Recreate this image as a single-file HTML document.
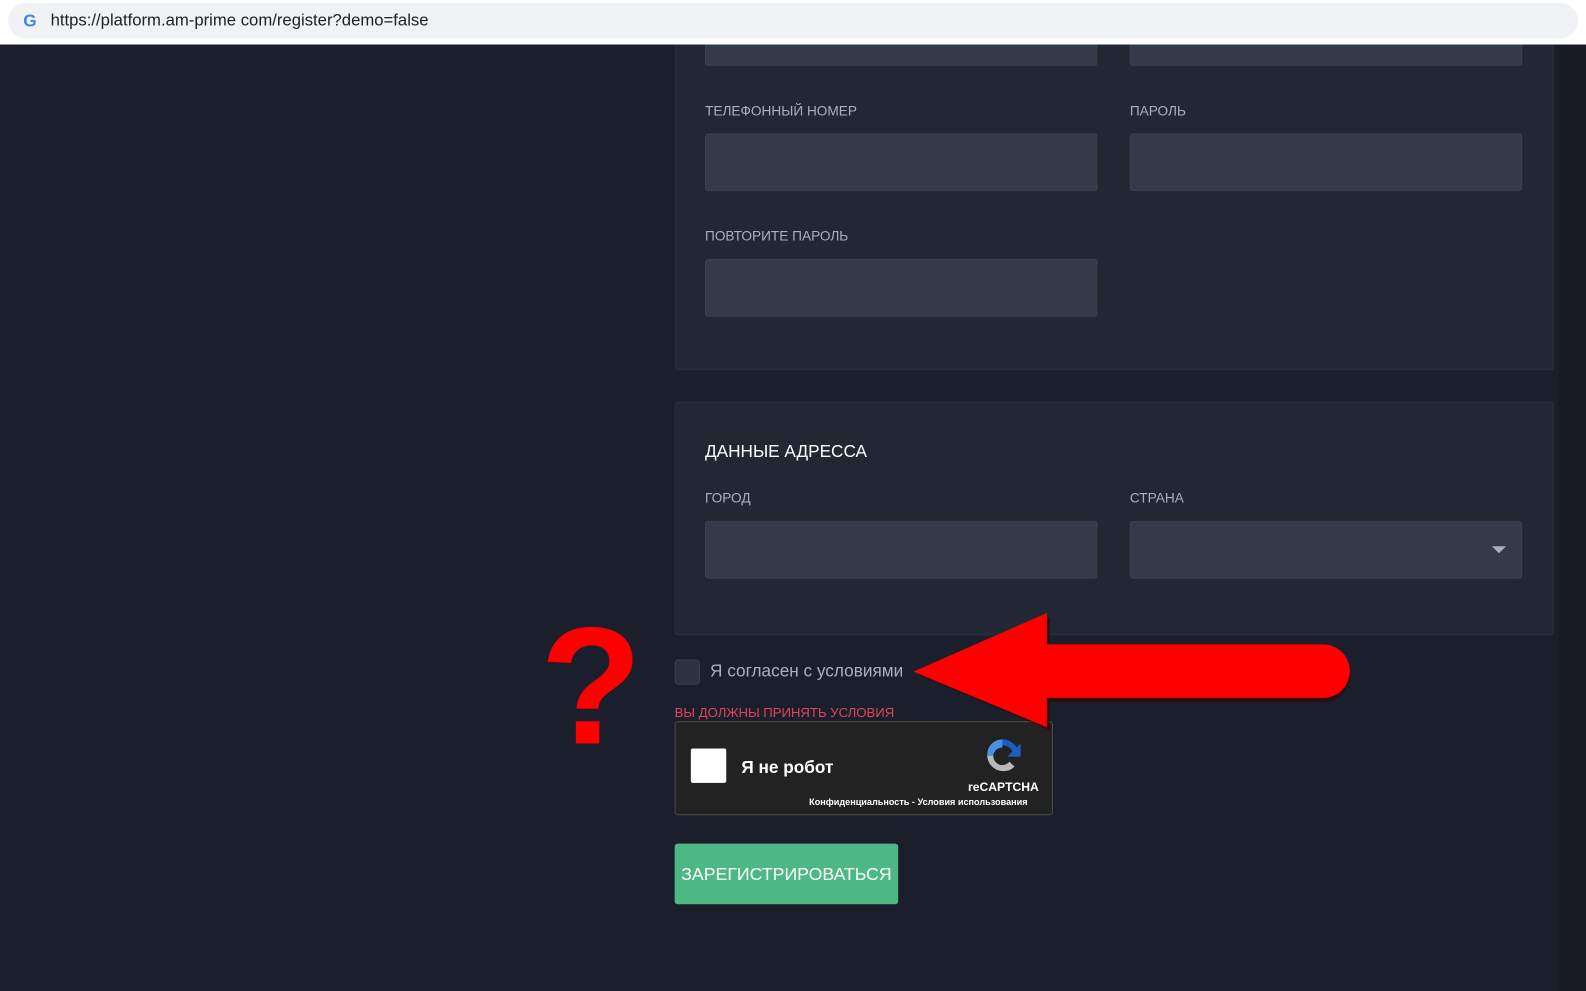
<!DOCTYPE html>
<html><head><meta charset="utf-8"><style>
*{margin:0;padding:0;box-sizing:border-box}
body{width:1586px;height:980px;background:#1b1f2c;font-family:"Liberation Sans",sans-serif;position:relative;overflow:hidden}
#w{position:absolute;left:0;top:0;width:1568px;height:969px;transform:scale(1.01148);transform-origin:0 0}
.bar{position:absolute;left:0;top:0;width:1568px;height:44px;background:#fff;z-index:10}
.url{position:absolute;left:8px;top:3px;width:1552px;height:35px;background:#f0f2f5;border-radius:18px}
.url span{position:absolute;left:42px;top:8px;font-size:16.5px;color:#202124}
.g{position:absolute;left:15px;top:8px;font-weight:bold;font-size:17px;color:#4285f4}
.panel{position:absolute;background:#222734;border:1px solid #2a3040;border-radius:3px}
.inp{position:absolute;background:#333a4a;border:1px solid #3a4152;border-radius:3px;height:57px;width:388px}
.lbl{position:absolute;font-size:13.5px;color:#aab0bd}
.abs{position:absolute}
</style></head><body><div id="w">
<div class="bar"><div class="url"><div class="g">G</div><span>https://platform.am-prime com/register?demo=false</span></div></div>
<div class="abs" style="left:1540px;top:44px;width:28px;height:936px;background:#181b25"></div>
<div class="panel" style="left:667px;top:30px;width:869px;height:336px;border-top:none"></div>
<div class="inp" style="left:697px;top:30px;height:35px"></div>
<div class="inp" style="left:1117px;top:30px;height:35px"></div>
<div class="lbl" style="left:697px;top:102px">ТЕЛЕФОННЫЙ НОМЕР</div>
<div class="lbl" style="left:1117px;top:102px">ПАРОЛЬ</div>
<div class="inp" style="left:697px;top:132px"></div>
<div class="inp" style="left:1117px;top:132px"></div>
<div class="lbl" style="left:697px;top:226px">ПОВТОРИТЕ ПАРОЛЬ</div>
<div class="inp" style="left:697px;top:256px"></div>
<div class="panel" style="left:667px;top:397px;width:869px;height:231px"></div>
<div class="abs" style="left:697px;top:437px;font-size:17px;color:#fff">ДАННЫЕ АДРЕССА</div>
<div class="lbl" style="left:697px;top:485px">ГОРОД</div>
<div class="lbl" style="left:1117px;top:485px">СТРАНА</div>
<div class="inp" style="left:697px;top:515px"></div>
<div class="inp" style="left:1117px;top:515px"></div>
<div class="abs" style="left:1475px;top:540px;width:0;height:0;border-left:7px solid transparent;border-right:7px solid transparent;border-top:7px solid #aab0bd"></div>
<div class="abs" style="left:667px;top:652px;width:25px;height:25px;background:#2c3242;border:1px solid #3a4152;border-radius:4px"></div>
<div class="abs" style="left:702px;top:654px;font-size:17px;color:#aab0bd">Я согласен с условиями</div>
<div class="abs" style="left:667px;top:697px;font-size:13px;color:#e0455a">ВЫ ДОЛЖНЫ ПРИНЯТЬ УСЛОВИЯ</div>
<div class="abs" style="left:667px;top:713px;width:374px;height:93px;background:#222;border:1px solid #4a4a4a;border-radius:3px"></div>
<div class="abs" style="left:683px;top:740px;width:35px;height:34px;background:#fff;border-radius:2px"></div>
<div class="abs" style="left:733px;top:749px;font-size:17px;color:#fff;font-weight:bold">Я не робот</div>
<svg class="abs" style="left:970px;top:727px" width="42" height="40" viewBox="0 0 42 40">
<path d="M21 4a16 16 0 0 1 14 8l4-4v13H26l5-5a10 10 0 0 0-10-6z" fill="#1c5fc4"/>
<path d="M6 20a15 15 0 0 1 15-16v8a9 9 0 0 0-9 8z" fill="#4a90e8"/>
<path d="M6 20h6a9 9 0 0 0 16 6l5 5a16 16 0 0 1-27-11z" fill="#b8b8b8"/>
</svg>
<div class="abs" style="left:957px;top:771px;font-size:12px;color:#fff;font-weight:bold">reCAPTCHA</div>
<div class="abs" style="left:800px;top:788px;font-size:9px;color:#fff;font-weight:bold">Конфиденциальность - Условия использования</div>
<div class="abs" style="left:667px;top:834px;width:221px;height:60px;background:#4cb985;border-radius:3px;color:#fff;font-size:17.5px;text-align:center;line-height:60px">ЗАРЕГИСТРИРОВАТЬСЯ</div>
<svg class="abs" style="left:0;top:0" width="1586" height="980">
<path d="M907 667 L1038 610 L1038 640 L1308 640 A27 27 0 0 1 1308 694 L1038 694 L1038 722 Z" fill="#3a0000" opacity=".6"/>
<path d="M903 664 L1035 606 L1035 637 L1308 637 A26.5 26.5 0 0 1 1308 690 L1035 690 L1035 719 Z" fill="#ff0000"/>
</svg>
<div class="abs" style="left:534px;top:596px;font-size:165px;font-weight:bold;color:#ff0000;line-height:1">?</div>
</div></body></html>
